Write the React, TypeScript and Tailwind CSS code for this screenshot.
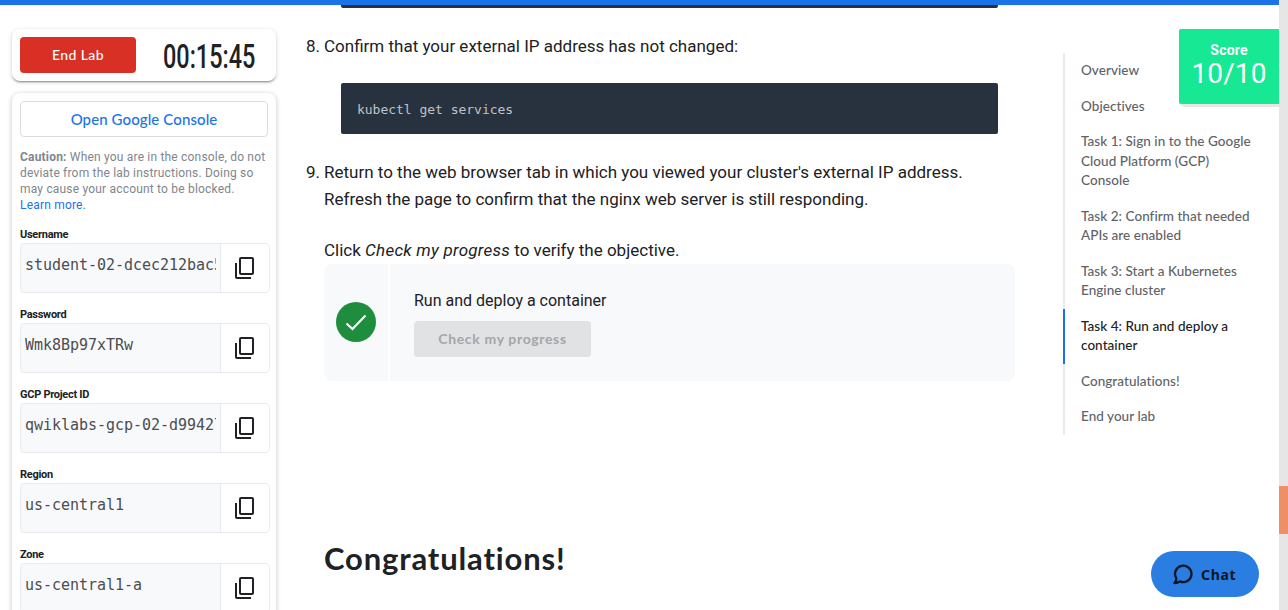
import React from "react";

const credentials = [
  { label: "Username", value: "student-02-dcec212bac5f" },
  { label: "Password", value: "Wmk8Bp97xTRw" },
  { label: "GCP Project ID", value: "qwiklabs-gcp-02-d99427" },
  { label: "Region", value: "us-central1" },
  { label: "Zone", value: "us-central1-a" },
];

const outline = [
  { lines: ["Overview"] },
  { lines: ["Objectives"] },
  { lines: ["Task 1: Sign in to the Google", "Cloud Platform (GCP)", "Console"] },
  { lines: ["Task 2: Confirm that needed", "APIs are enabled"] },
  { lines: ["Task 3: Start a Kubernetes", "Engine cluster"] },
  { lines: ["Task 4: Run and deploy a", "container"], active: true },
  { lines: ["Congratulations!"] },
  { lines: ["End your lab"] },
];

function CopyIcon() {
  return (
    <svg width="19" height="22" viewBox="0 0 19 22" fill="none" stroke="#202124" strokeWidth="2">
      <rect x="5" y="1" width="13" height="16" rx="1" />
      <path d="M1 6v14a1 1 0 0 0 1 1h14" />
    </svg>
  );
}

function Credential({ label, value }: { label: string; value: string }) {
  return (
    <div className="mb-[14px]">
      <div className="h-4 pt-px text-[11px] leading-[14px] font-bold tracking-[-0.28px] text-[#202124]">{label}</div>
      <div className="flex h-[50px] w-[250px] overflow-hidden rounded-[4px] border border-[#e8eaed]">
        <div className="w-[200px] border-r border-[#e8eaed] bg-[#f8f9fb] pr-[4px] pl-[4px]">
          <div className="overflow-hidden pt-[11px] font-['DejaVu_Sans_Mono',monospace] text-[15px] leading-[20px] tracking-[-0.03px] whitespace-nowrap text-[#4a4d51]">
            {value}
          </div>
        </div>
        <div className="flex flex-1 items-center justify-center pr-[2px]">
          <CopyIcon />
        </div>
      </div>
    </div>
  );
}

function Sidebar() {
  return (
    <aside className="w-[264px] shrink-0 pt-6">
      <div className="flex h-[52px] items-center rounded-[8px] bg-white px-2 shadow-[0_2px_2px_-1px_rgba(0,0,0,0.4),0_1px_4px_rgba(0,0,0,0.18)]">
        <button className="h-9 w-[116px] rounded-[4px] bg-[#d93025] pb-px font-[Lato,sans-serif] text-[14px] font-medium tracking-[0.4px] text-white">
          End Lab
        </button>
        <div className="flex flex-1 justify-center pl-[14px]">
          <div className="w-[92px]">
            <div className="origin-left scale-x-[0.69] pt-px text-[34px] leading-[40px] font-medium whitespace-nowrap text-[#202124]">
              00:15:45
            </div>
          </div>
        </div>
      </div>
      <div className="mt-3 h-[600px] rounded-[8px] bg-white px-2 pt-2 shadow-[0_1px_5px_rgba(0,0,0,0.24)]">
        <button className="h-9 w-[248px] rounded-[4px] border border-[#dadce0] font-[Lato,sans-serif] text-[15px] font-medium tracking-[0.1px] text-[#1a73e8]">
          Open Google Console
        </button>
        <p className="mt-3 mb-[14px] text-[12px] leading-4 tracking-[0.19px] whitespace-nowrap text-[#80868b]">
          <b>Caution:</b> When you are in the console, do not
          <br />
          deviate from the lab instructions. Doing so
          <br />
          may cause your account to be blocked.
          <br />
          <span className="text-[#1a73e8]">Learn more.</span>
        </p>
        {credentials.map((c) => (
          <Credential key={c.label} {...c} />
        ))}
      </div>
    </aside>
  );
}

function Instructions() {
  return (
    <main className="w-[787px] shrink-0 pl-[30px] text-[17px] leading-[27px] text-[#202124]">
      <div className="ml-[35px] h-[3px] w-[657px] rounded-b-[2px] bg-[#28323f]" />
      <div className="mt-[25px] flex whitespace-nowrap">
        <span className="w-[18px]">8.</span>
        <span>Confirm that your external IP address has not changed:</span>
      </div>
      <div className="mt-[23px] ml-[35px] flex h-[51px] w-[657px] items-center rounded-[2px] bg-[#28323f] px-4 pt-[2px] font-['DejaVu_Sans_Mono',monospace] text-[13px] tracking-[-0.02px] text-[#bfc3c7]">
        kubectl get services
      </div>
      <div className="mt-[25px] flex whitespace-nowrap">
        <span className="w-[18px]">9.</span>
        <div>
          Return to the web browser tab in which you viewed your cluster's external IP address.
          <br />
          Refresh the page to confirm that the nginx web server is still responding.
        </div>
      </div>
      <p className="mt-6 ml-[18px] whitespace-nowrap">
        Click <em className="tracking-[0.25px]">Check my progress</em> to verify the objective.
      </p>
      <section className="ml-[18px] flex h-[117px] w-[691px] overflow-hidden rounded-[8px] bg-[#f8f9fb]">
        <div className="flex w-[66px] items-center justify-start border-r-2 border-white pb-[2px] pl-3">
          <svg width="40" height="40" viewBox="0 0 40 40">
            <circle cx="20" cy="20" r="20" fill="#1e8e3e" />
            <path d="M10.5 21.5l6 5.5 13-13.5" fill="none" stroke="#fff" strokeWidth="2.2" />
          </svg>
        </div>
        <div className="pt-[23px] pl-6">
          <div className="text-[16px] leading-[27px]">Run and deploy a container</div>
          <button className="mt-[7px] block h-9 w-[177px] rounded-[4px] bg-[#e1e2e4] pb-[2px] font-[Lato,sans-serif] text-[14px] font-bold tracking-[0.65px] text-[#a4a6a9]">
            Check my progress
          </button>
        </div>
      </section>
      <h1 className="mt-[157px] ml-[18px] font-[Lato,sans-serif] text-[31px] leading-[40px] font-bold tracking-[0.85px] whitespace-nowrap [font-variant-ligatures:none]">
        Congratulations!
      </h1>
    </main>
  );
}

function Outline() {
  return (
    <nav className="mt-12 w-[216px] shrink-0 self-start font-[Lato,sans-serif] text-[13.5px] leading-[19.5px] font-medium tracking-[0.05px] [font-variant-ligatures:none]">
      {outline.map((item) => (
        <div
          key={item.lines[0]}
          className={
            item.active
              ? "border-l-2 border-[#1a73e8] py-2 pl-4 text-[#202124]"
              : "border-l-2 border-[#e8eaed] py-2 pl-4 text-[#5f6368]"
          }
        >
          {item.lines.map((line) => (
            <div key={line} className="whitespace-nowrap">
              {line}
            </div>
          ))}
        </div>
      ))}
    </nav>
  );
}

export default function App() {
  return (
    <div className="relative flex h-[610px] w-[1288px] overflow-hidden bg-white font-[Roboto,sans-serif]">
      <div className="flex w-[1279px] flex-col overflow-hidden">
        <div className="h-[5px] shrink-0 bg-[#1a73e8]" />
        <div className="flex pl-3">
          <Sidebar />
          <Instructions />
          <Outline />
        </div>
      </div>
      <div className="w-[9px] bg-[#e6e6e6] pt-[486px]">
        <div className="h-12 bg-[#f08e66]" />
      </div>
      <div className="absolute top-[29px] left-[1179px] h-[75px] w-[100px] rounded-l-[2px] bg-[#17e894] pt-3 text-center text-white shadow-[3px_3px_0_#e6e6e6] [clip-path:inset(0_0_-4px_0)]">
        <div className="text-[14px] leading-[18px] font-bold tracking-[0.2px]">Score</div>
        <div className="text-[28px] leading-[30px] tracking-[0.1px]">10/10</div>
      </div>
      <button className="absolute top-[551px] left-[1151px] flex h-[46px] w-[108px] items-center rounded-full bg-[#2a7de1] pl-[22px] font-['Noto_Sans',sans-serif] text-[14px] font-bold tracking-[0.7px] text-[#0b1623]">
        <svg width="20" height="21" viewBox="0 0 20 21" fill="none" stroke="#0b1623" strokeWidth="2.3" strokeLinejoin="round">
          <path d="M3.3 14.2A8.2 8.2 0 1 1 7 17.4C5.4 18.6 3.6 19.1 1.4 19.1C2.8 17.8 3.5 16.2 3.3 14.2z" />
        </svg>
        <span className="ml-2">Chat</span>
      </button>
    </div>
  );
}
